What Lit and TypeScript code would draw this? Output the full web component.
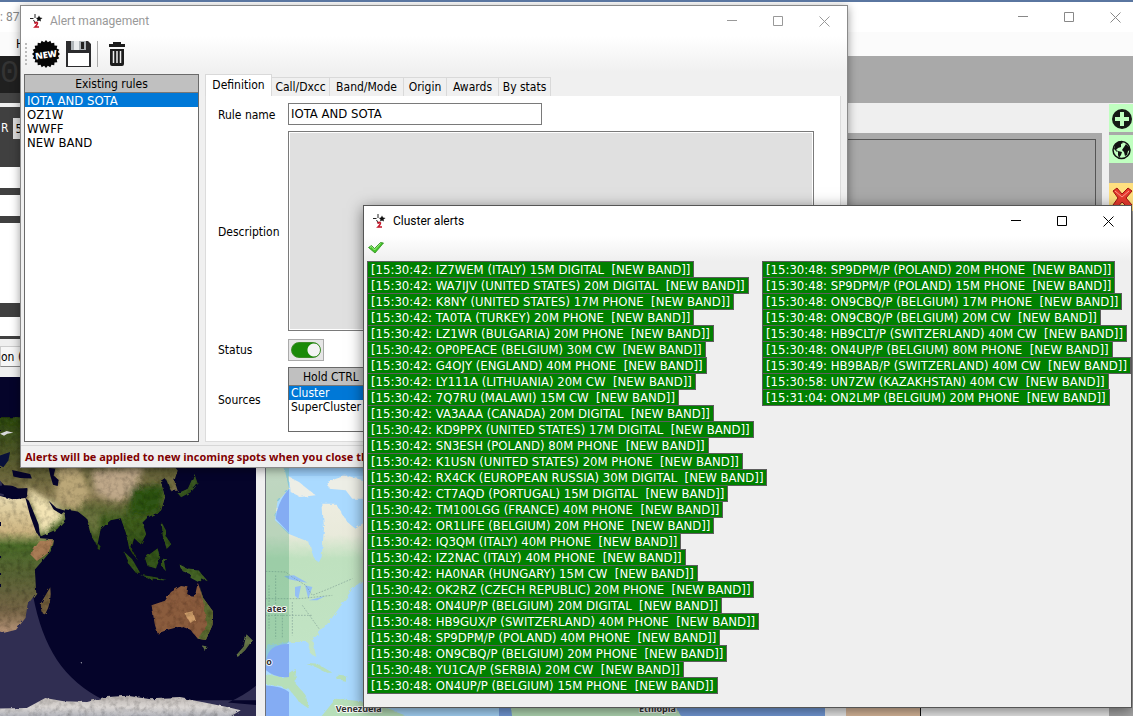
import { LitElement, html, css, svg } from "lit";
import { customElement, property } from "lit/decorators.js";

const FIRST: string[] = [
  "[15:30:42: IZ7WEM (ITALY) 15M DIGITAL  [NEW BAND]]",
  "[15:30:42: WA7IJV (UNITED STATES) 20M DIGITAL  [NEW BAND]]",
  "[15:30:42: K8NY (UNITED STATES) 17M PHONE  [NEW BAND]]",
  "[15:30:42: TA0TA (TURKEY) 20M PHONE  [NEW BAND]]",
  "[15:30:42: LZ1WR (BULGARIA) 20M PHONE  [NEW BAND]]",
  "[15:30:42: OP0PEACE (BELGIUM) 30M CW  [NEW BAND]]",
  "[15:30:42: G4OJY (ENGLAND) 40M PHONE  [NEW BAND]]",
  "[15:30:42: LY111A (LITHUANIA) 20M CW  [NEW BAND]]",
  "[15:30:42: 7Q7RU (MALAWI) 15M CW  [NEW BAND]]",
  "[15:30:42: VA3AAA (CANADA) 20M DIGITAL  [NEW BAND]]",
  "[15:30:42: KD9PPX (UNITED STATES) 17M DIGITAL  [NEW BAND]]",
  "[15:30:42: SN3ESH (POLAND) 80M PHONE  [NEW BAND]]",
  "[15:30:42: K1USN (UNITED STATES) 20M PHONE  [NEW BAND]]",
  "[15:30:42: RX4CK (EUROPEAN RUSSIA) 30M DIGITAL  [NEW BAND]]",
  "[15:30:42: CT7AQD (PORTUGAL) 15M DIGITAL  [NEW BAND]]",
  "[15:30:42: TM100LGG (FRANCE) 40M PHONE  [NEW BAND]]",
  "[15:30:42: OR1LIFE (BELGIUM) 20M PHONE  [NEW BAND]]",
  "[15:30:42: IQ3QM (ITALY) 40M PHONE  [NEW BAND]]",
  "[15:30:42: IZ2NAC (ITALY) 40M PHONE  [NEW BAND]]",
  "[15:30:42: HA0NAR (HUNGARY) 15M CW  [NEW BAND]]",
  "[15:30:42: OK2RZ (CZECH REPUBLIC) 20M PHONE  [NEW BAND]]",
  "[15:30:48: ON4UP/P (BELGIUM) 20M DIGITAL  [NEW BAND]]",
  "[15:30:48: HB9GUX/P (SWITZERLAND) 40M PHONE  [NEW BAND]]",
  "[15:30:48: SP9DPM/P (POLAND) 40M PHONE  [NEW BAND]]",
  "[15:30:48: ON9CBQ/P (BELGIUM) 20M PHONE  [NEW BAND]]",
  "[15:30:48: YU1CA/P (SERBIA) 20M CW  [NEW BAND]]",
  "[15:30:48: ON4UP/P (BELGIUM) 15M PHONE  [NEW BAND]]",
];

const SECOND: string[] = [
  "[15:30:48: SP9DPM/P (POLAND) 20M PHONE  [NEW BAND]]",
  "[15:30:48: SP9DPM/P (POLAND) 15M PHONE  [NEW BAND]]",
  "[15:30:48: ON9CBQ/P (BELGIUM) 17M PHONE  [NEW BAND]]",
  "[15:30:48: ON9CBQ/P (BELGIUM) 20M CW  [NEW BAND]]",
  "[15:30:48: HB9CLT/P (SWITZERLAND) 40M CW  [NEW BAND]]",
  "[15:30:48: ON4UP/P (BELGIUM) 80M PHONE  [NEW BAND]]",
  "[15:30:49: HB9BAB/P (SWITZERLAND) 40M CW  [NEW BAND]]",
  "[15:30:58: UN7ZW (KAZAKHSTAN) 40M CW  [NEW BAND]]",
  "[15:31:04: ON2LMP (BELGIUM) 20M PHONE  [NEW BAND]]",
];

const base = css`
  *, *::before, *::after { box-sizing: border-box; }
  button { font: inherit; color: inherit; background: none; border: 0; padding: 0; margin: 0; }
  svg { display: block; }
`;

const logo = svg`
  <path d="M5 0v4M0 4.500h3.500M3.500 6L5.500 9.500" stroke="#222" stroke-width="1" fill="none"/>
  <path d="M9 1.500l1 2 2.500.5-2 1.500.5 2-2-1-2 1 .5-2L6 4l2-.5z" fill="#111"/>
  <path d="M4.500 9.500q1.500-2 3-.5 0 1.500-2.500 4h4" stroke="#c41528" stroke-width="1.600" fill="none"/>`;

/** Minimise, maximise and close buttons. */
@customElement("caption-buttons")
export class CaptionButtons extends LitElement {
  static styles = [base, css`
    :host { display: flex; gap: 1px; }
    button { width: 45px; height: 30px; display: grid; place-items: center; }
    svg { fill: none; stroke: currentColor; stroke-width: 1; }
  `];
  render() {
    return html`
      <button aria-label="Minimize"><svg width="11" height="11"><path d="M0 4.500h10"/></svg></button>
      <button aria-label="Maximize"><svg width="11" height="11"><path d="M.5.5h9v9h-9z"/></svg></button>
      <button aria-label="Close"><svg width="11" height="11"><path d="M.5.5l10 10M10.500.5l-10 10"/></svg></button>`;
  }
}

/** Title bar of a window: logo, caption, buttons. */
@customElement("title-bar")
export class TitleBar extends LitElement {
  @property() caption = "";
  static styles = [base, css`
    :host { display: flex; align-items: center; height: 30px; padding-left: 9px; background: #fff;
      font: 12px/16px Roboto, "Open Sans", sans-serif; }
    .caption { flex: 1; margin-left: 6px; }
  `];
  render() {
    return html`<svg width="14" height="14" aria-hidden="true">${logo}</svg>
      <span class="caption">${this.caption}</span><caption-buttons></caption-buttons>`;
  }
}

@customElement("day-night-map")
export class DayNightMap extends LitElement {
  static styles = [base, css`
    :host { display: block; overflow: hidden; background: #05042a; }
    svg { width: 100%; height: 100%; }
  `];
  render() {
    return html`<svg viewBox="0 -249 768 1017" preserveAspectRatio="xMinYMax slice" role="img" aria-label="Day and night map">
      <defs>
        <linearGradient id="africa" x1="0" y1="0" x2="0" y2="1">
          <stop offset="0" stop-color="#eadcb0"/><stop offset=".26" stop-color="#cdb582"/>
          <stop offset=".36" stop-color="#4b6a2a"/><stop offset=".6" stop-color="#5a6236"/>
          <stop offset=".85" stop-color="#786648"/><stop offset="1" stop-color="#b9967a"/>
        </linearGradient>
        <linearGradient id="asia" x1="0" y1="0" x2="0" y2="1">
          <stop offset="0" stop-color="#2e4a14"/><stop offset=".35" stop-color="#5f5f34"/>
          <stop offset=".55" stop-color="#84774e"/><stop offset=".72" stop-color="#3f5d20"/><stop offset="1" stop-color="#2d4b15"/>
        </linearGradient>
        <linearGradient id="ice" x1="0" y1="0" x2="0" y2="1">
          <stop offset="0" stop-color="#b5aeaa"/><stop offset=".5" stop-color="#dcd8d5"/><stop offset="1" stop-color="#a9abb4"/>
        </linearGradient>
        <filter id="rough" x="-5%" y="-5%" width="110%" height="110%">
          <feTurbulence type="fractalNoise" baseFrequency=".06" numOctaves="4" seed="4" result="n"/>
          <feDisplacementMap in="SourceGraphic" in2="n" scale="10" result="d"/>
          <feColorMatrix in="n" values="0 0 0 0 0  0 0 0 0 0  0 0 0 0 0  .9 0 0 0 -.38" result="shade"/>
          <feComposite in="shade" in2="d" operator="in" result="s"/>
          <feMerge><feMergeNode in="d"/><feMergeNode in="s"/></feMerge>
        </filter>
        <filter id="soft"><feGaussianBlur stdDeviation="10"/></filter>
        <clipPath id="land"><path d="M0-129H63V0H505L530 30 520 60 505 90 495 55 480 65 492 110 480 150 440 170 425 185 436 220 420 250 400 232 392 260 410 300 385 260 375 215 360 172 330 178 300 205 290 255 272 225 258 172 232 152 190 145 195 175 170 205 122 226 98 170 77 112 82 82 40 84 20 82 0 60z"/></clipPath>
      </defs>
      <rect y="-249" width="768" height="1017" fill="#05042a"/>
      <path d="M0 400H98Q120 520 170 595T310 715H768V768H0zM768 668Q730 700 680 722L768 730zM0 40L12 105H0z" fill="#302e52"/>
      <g filter="url(#rough)">
        <path d="M0-129H63V0H505L530 30 520 60 530 90 510 90 495 55 480 65 492 110 480 150 440 170 425 185 436 220 420 250 400 232 392 260 410 300 385 260 375 215 360 172 330 178 300 205 290 255 272 225 258 172 232 152 190 145 195 175 170 205 122 226 98 170 77 112 82 82 40 84 20 82 0 60z" fill="url(#asia)"/>
        <g clip-path="url(#land)"><g filter="url(#soft)">
          <path d="M78 80L150 120 195 165 120 226z" fill="#f3e4b4"/>
          <path d="M170 20L240 20 270 100 225 150 165 130z" fill="#bba778"/>
          <path d="M270 30L430 20 400 90 350 125 285 100z" fill="#c0a98a"/>
          <path d="M390 80L500 70 480 160 380 170z" fill="#2f5218"/>
          <path d="M235 150L300 150 290 240z" fill="#6d7540"/>
        </g></g>
        <path d="M0 106L40 116 76 112 100 180 120 232 158 235 152 270 104 325 108 395 82 430 76 470 48 505 12 514 0 510z" fill="url(#africa)"/>
        <path d="M120 238L157 236 145 275 110 300 90 280z" fill="#a87b54"/>
        <path d="M150 378Q156 420 135 458 120 462 122 425z" fill="#75603e"/>
        <path d="M292 250l8 5-3 12-6-3z" fill="#30501d"/>
        <path d="M366 268L395 295 418 335 405 335 385 310zM415 340L465 348 500 358 455 356zM432 290L470 262 478 290 465 322 440 315zM483 290l18 2-12 8 6 30-12-12zM482 185l14 25-5 10 20 30-14 14-12-40z" fill="#34541e"/>
        <path d="M535 310L560 322 590 325 620 360 600 352 590 362 568 350 570 340 545 330z" fill="#446428"/>
        <path d="M530 98L560 84 580 40 590 70 570 94 540 110z" fill="#385424"/>
        <path d="M452 432L492 418 510 392 540 374 562 378 558 398 580 410 590 365 606 410 635 450 634 490 614 535 590 532 568 505 540 494 500 505 470 516 462 490z" fill="#8a5c3e"/>
        <path d="M594 370L606 410 635 450 634 490 614 535 590 532 618 490 606 420z" fill="#5b6b30"/>
        <path d="M550 455l25-5 8 25-15 10z" fill="#cf9e6a"/>
        <path d="M602 552l14 2-6 14zM735 518l18 18-22 30-22 20-4-6 22-25z" fill="#66764a"/>
        <path d="M0 740L80 738 135 708 190 718 260 720 310 706 380 702 450 712 540 708 610 722 680 736 718 745 680 768H0z" fill="url(#ice)"/>
      </g>
      <path d="M0 75Q35 70 55 84L82 86 80 110 40 108 0 98zM36 28L90 40 95 54 60 52 40 48zM145 22L165 25 160 45 175 58 172 76 158 72 150 45zM76 112L86 120 115 190 119 225 108 215 90 165zM145 120L168 142 195 150 183 160 160 146z" fill="#05042a"/>
      <path d="M0-80l20-8 20 5-18 3-10 6zM240 602l4 0 0 4z" fill="#d8d8dc"/>
      <path d="M0-15L30-25 25 0 10 20 0 15z" fill="#08103a"/>
    </svg>`;
  }
}

@customElement("street-map")
export class StreetMap extends LitElement {
  static styles = [base, css`
    :host { display: block; overflow: hidden; background: #aadaff; border-left: 1px solid #6c7078; }
    svg { width: 100%; height: 100%; }
    text { font: bold 27px "Noto Sans", sans-serif; fill: #333; stroke: #fff; stroke-width: 5px; paint-order: stroke; }
  `];
  render() {
    return html`<svg viewBox="801 -249 1677 1017" preserveAspectRatio="xMinYMax slice" role="img" aria-label="Street map">
      <defs><linearGradient id="na" x1="0" y1="0" x2="0" y2="1">
        <stop offset="0" stop-color="#f3f0e6"/><stop offset=".38" stop-color="#e9eadb"/><stop offset=".5" stop-color="#bfe1bf"/><stop offset="1" stop-color="#c2e4c5"/>
      </linearGradient>
      <filter id="coast"><feTurbulence type="fractalNoise" baseFrequency=".06" numOctaves="3" seed="2" result="n"/>
        <feDisplacementMap in="SourceGraphic" in2="n" scale="14"/></filter></defs>
      <rect x="798" y="-249" width="1680" height="1017" fill="#aadaff"/>
      <path d="M1500 600H2478V768H1500z" fill="#769edd"/>
      <g filter="url(#coast)">
        <path d="M780-10H850L870 80 835 120 828 175 868 215 930 240 945 290 960 300 968 285 975 200 970 125 1010 125 1045 180 1070 200 1110 170V340L1060 380 1030 425 990 480 940 535 952 585 935 575 925 540 870 540 810 550 780 590z" fill="url(#na)"/>
        <path d="M870 45L900 60 950 100 905 105 875 90zM985 60L1040 40 1110 60V110L1060 110 1040 85 990 80z" fill="#edeee6"/>
        <path d="M920 605L960 608 1000 632 985 632 950 615zM1010 640l36 4-8 12-25-4zM790 635L850 645 890 620 890 665 920 700 930 740 900 720 870 680 800 665zM970 760L1010 710 1110 720 1240 768H960zM1530 690H2000L2050 768H1540z" fill="#b7dfb9"/>
      </g>
      <path d="M855 342L885 340 925 362 900 358 870 352zM888 375l18-4-8 40-10-10zM918 370l22 5-12 35zM930 415l50-14-25 14z" fill="#94bff5"/>
      <path d="M800 328L860 330 880 345 920 370 940 400 990 380 1060 350M810 370V500M830 340V530M800 410H900L1000 400M850 440V530M880 420V520M910 430L960 500M798 460H940" fill="none" stroke="#6d8b86" stroke-width="1.500" stroke-dasharray="5 4"/>
      <path d="M801-249H870V80L835 120 828 175 870 212V540L801 600z" fill="#3f9a68" opacity=".28"/>
      <path d="M870 80Q835 120 830 170L870 212zM801 600Q805 545 870 546V645Q830 650 801 625zM798 670Q850 672 870 690V768H798z" fill="#84acf3"/>
      <path d="M870-249H1110V42H870z" fill="#93c6f5" opacity=".6"/>
      <text x="804" y="450">ates</text>
      <text x="802" y="610">o</text>
      <text x="1010" y="751">Venezuela</text>
      <text x="1920" y="751">Ethiopia</text>
    </svg>`;
  }
}

@customElement("alert-window")
export class AlertWindow extends LitElement {
  static styles = [base, css`
    :host { display: flex; flex-direction: column; background: #f0f0f0; border: 1px solid #8a8a8a; color: #000;
      box-shadow: 0 2px 9px rgba(0,0,0,.4); font: 12px/16px var(--ui); }
    title-bar { color: #999; }
    .tools { display: flex; align-items: center; height: 36px; margin-bottom: 2px; padding-left: 4px;
      background: linear-gradient(#fff, #f0f0f0); }
    .grip { width: 2px; height: 22px; border-left: 2px dotted #bbb; }
    .tools button { margin-left: 5px; }
    .rule { width: 1px; height: 26px; margin: 0 5px 0 6px; background: #aaa; }
    .body { flex: 1; display: flex; gap: 6px; padding: 0 6px 3px 3px; min-height: 0; }
    .box { display: flex; flex-direction: column; border: 1px solid #6a6a6a; background: #fff; }
    .head { height: 18px; line-height: 18px; text-align: center; background: #c0c0c0; border-bottom: 1px solid #777; white-space: nowrap; overflow: hidden; }
    .rules { width: 175px; }
    select { flex: 1; width: 100%; border: 0; padding: 0; margin: 0; outline: 0; background: #fff; font: inherit; color: #000; overflow: hidden; border-radius: 0; }
    option { height: 14px; min-height: 14px; padding: 0 2px; font: 12px/14px var(--ui); }
    .rules option { font: 13px/15px var(--ui); }
    option:checked { background: #0078d7 linear-gradient(#0078d7, #0078d7); color: #fff; }
    .pane { flex: 1; display: flex; flex-direction: column; min-width: 0; }
    .tabs { display: flex; align-items: flex-end; height: 22px; }
    .tab { height: 19px; border: 1px solid #d9d9d9; border-left: 0; border-bottom: 0; background: #f0f0f0; text-align: center; white-space: nowrap; }
    .on { height: 22px; border-left: 1px solid #d9d9d9; background: #fff; width: 67px; padding-bottom: 1px; }
    .w58 { width: 58px; } .w74 { width: 74px; } .w43 { width: 43px; } .w52 { width: 52px; }
    .form { flex: 1; display: grid; grid-template-columns: 70px 1fr; grid-template-rows: 22px 201px 23px 65px; row-gap: 6px;
      align-items: center; padding: 7px 26px 0 12px; background: #fff; border: 1px solid #dcdcdc; border-top: 0; }
    label { padding-top: 1px; }
    .box label { padding-top: 0; }
    input[type="text"] { width: 254px; height: 22px; padding: 0 2px 1px; border: 1px solid #7a7a7a; font: 13px/16px var(--ui); color: #000; outline: 0; }
    textarea { display: block; align-self: start; width: 100%; height: 200px; border: 1px solid #7a7a7a; background: #e0e0e0; resize: none; box-shadow: inset 0 0 0 1px #fff; }
    .switch { display: grid; place-items: center; width: 36px; height: 22px; background: #e6e6e6; border: 1px solid #aaa; }
    .switch input { appearance: none; width: 30px; height: 16px; margin: 0; border: 1px solid #3c8c28; border-radius: 8px;
      background: radial-gradient(circle at 22px 7px, #f4f4f4 6px, #1a8a08 7px); }
    .sources { width: 254px; height: 65px; }
    .sources .head { text-align: left; padding-left: 14px; }
    .note { height: 22px; padding: 3px 4px; border-top: 1px solid #d7d7d7; color: #800000; font: bold 11px/16px "Open Sans", "Noto Sans", sans-serif; white-space: nowrap; overflow: hidden; }
  `];
  render() {
    const teeth = Array.from({ length: 20 }, (_, i) => {
      const a = (i * Math.PI) / 10, b = a + Math.PI / 20;
      return `${14 + 14 * Math.cos(a)},${14 + 14 * Math.sin(a)} ${14 + 12 * Math.cos(b)},${14 + 12 * Math.sin(b)}`;
    }).join(" ");
    return html`
      <title-bar caption="Alert management"></title-bar>
      <div class="tools">
        <span class="grip"></span>
        <button aria-label="New rule"><svg width="28" height="28"><polygon points=${teeth} fill="#050505"/>
          <text x="14" y="18" text-anchor="middle" transform="rotate(-8 14 14)" fill="#fff" font-family="Open Sans, sans-serif" font-weight="800" font-size="9">NEW</text></svg></button>
        <button aria-label="Save rule"><svg width="26" height="28"><path d="M1 1h22l3 3v23H1z" fill="#2b2b2d"/><path d="M6 1h15v9H6z" fill="#aeb4b8"/><path d="M9 1h5v9H9z" fill="#e9ecee"/><path d="M16 2h3v7h-3z" fill="#222"/><path d="M3 13h21v13H3z" fill="#fff"/></svg></button>
        <span class="rule"></span>
        <button aria-label="Delete rule"><svg width="18" height="26"><path d="M1 3h16v3H1zM5 3V1h8v2M2 8h14v15q0 2-2 2H4q-2 0-2-2z" fill="#1d1d1d"/><path d="M5.500 10v12M9 10v12M12.500 10v12" stroke="#eee" stroke-width="1.500"/></svg></button>
      </div>
      <div class="body">
        <div class="box rules">
          <label class="head" for="rules">Existing rules</label>
          <select id="rules" size="8">
            <option selected>IOTA AND SOTA</option><option>OZ1W</option><option>WWFF</option><option>NEW BAND</option>
          </select>
        </div>
        <div class="pane">
          <div class="tabs" role="tablist">
            <button class="tab on" role="tab" aria-selected="true">Definition</button>
            <button class="tab w58" role="tab">Call/Dxcc</button>
            <button class="tab w74" role="tab">Band/Mode</button>
            <button class="tab w43" role="tab">Origin</button>
            <button class="tab w52" role="tab">Awards</button>
            <button class="tab w52" role="tab">By stats</button>
          </div>
          <div class="form">
            <label for="name">Rule name</label><input id="name" type="text" .value=${"IOTA AND SOTA"} />
            <label for="desc">Description</label><textarea id="desc"></textarea>
            <label for="status">Status</label><span class="switch"><input id="status" type="checkbox" role="switch" checked /></span>
            <label for="sources">Sources</label>
            <div class="box sources">
              <div class="head">Hold CTRL</div>
              <select id="sources" size="3" multiple><option selected>Cluster</option><option>SuperCluster</option></select>
            </div>
          </div>
        </div>
      </div>
      <div class="note">Alerts will be applied to new incoming spots when you close this</div>`;
  }
}

@customElement("cluster-window")
export class ClusterWindow extends LitElement {
  static styles = [base, css`
    :host { display: flex; flex-direction: column; background: #efefef; border: 1px solid #555; color: #000;
      box-shadow: 0 3px 14px rgba(0,0,0,.5); font: 13px/15px var(--ui); }
    .tools { height: 25px; padding: 5px 4px; background: linear-gradient(#fff, #efefef); }
    .lists { display: grid; grid-template-columns: 389px 1fr; gap: 6px; padding-left: 3px; }
    ul { list-style: none; margin: 0; padding: 0 0 1px; display: flex; flex-direction: column; align-items: flex-start; }
    li { height: 17px; margin-bottom: -1px; padding: 0 3px; border: 1px solid #5d5d5d; background: #008000; color: #fff; white-space: pre; }
  `];
  render() {
    const list = (rows: string[]) => html`<ul>${rows.map((r) => html`<li>${r}</li>`)}</ul>`;
    return html`
      <title-bar caption="Cluster alerts"></title-bar>
      <div class="tools"><button aria-label="Acknowledge alerts"><svg width="16" height="14"><path d="M.5 6.500l3-2 3 3 6-6 3 .5-8.500 10z" fill="#45c52a" stroke="#2c8b1c" stroke-width=".8"/><path d="M2 6.500l1.500-1 3 3.500 6-6.500" fill="none" stroke="#a5ee8b"/></svg></button></div>
      <div class="lists">${list(FIRST)}${list(SECOND)}</div>`;
  }
}

@customElement("app-root")
export class AppRoot extends LitElement {
  static styles = [base, css`
    :host { --ui: "DejaVu Sans Condensed", "DejaVu Sans", sans-serif;
      position: relative; display: flex; flex-direction: column;
      height: 100vh; overflow: hidden; background: #efefef; border-top: 2px solid #5a76a0; font: 12px/16px var(--ui); color: #000; }
    .caption { display: flex; justify-content: space-between; align-items: center; height: 30px; background: #fff; color: #888; white-space: nowrap; }
    .caption span { font: 12px/16px Roboto, "Open Sans", sans-serif; }
    .caption caption-buttons { margin-right: -5px; }
    .menu { height: 24px; padding: 4px 16px; background: #fbfbfb; }
    .band { display: flex; height: 47px; background: #a9a9a9; }
    .lcd { width: 256px; background: #202020; border-bottom: 10px solid #444; overflow: hidden; color: #343434; font: 32px/36px "Liberation Mono", monospace; }
    .content { flex: 1; display: flex; min-height: 0; }
    .left { width: 256px; display: flex; flex-direction: column; }
    .report { display: flex; gap: 4px; height: 60px; margin-top: 4px; padding: 11px 1px; background: #404040; color: #fff; line-height: 20px; }
    .report input { width: 40px; height: 21px; padding: 0 3px; border: 0; background: #ddd; font: inherit; }
    .row { background: #fff; border-bottom: 7px solid #404040; height: 28px; }
    .tall { height: 94px; border-bottom-width: 14px; }
    .thin { height: 22px; border-bottom-width: 3px; }
    .tab { height: 21px; margin: 7px 0 10px; border: 1px solid #ccc; border-bottom-color: #888; background: #f6f6f6; text-align: left; line-height: 18px; }
    day-night-map { flex: 1; min-height: 0; }
    .center { flex: 1; display: flex; flex-direction: column; min-width: 0; }
    .stage { flex: 1; margin: 30px 0 11px 10px; padding: 6px; background: #a9a9a9; }
    .inner { height: 100%; border: 1px solid #555; }
    .lower { display: flex; height: 339px; gap: 10px; padding-left: 9px; }
    street-map { width: 560px; }
    .tan { width: 75px; margin-left: 11px; background: #dfbd9f; border-right: 1px solid #111; }
    .rail { width: 24px; margin: 1px 0 0 7px; background: #a9a9a9; display: flex; flex-direction: column; gap: 3px; }
    .rail button { height: 28px; background: #c0ffc0; overflow: hidden; display: grid; justify-content: start; align-items: center; padding: 2px 0 0 3px; }
    .rail .del { margin-top: 17px; background: #ffe080; }
    alert-window { position: absolute; left: 20px; top: 3px; width: 828px; height: 463px; }
    cluster-window { position: absolute; left: 363px; top: 203px; width: 769px; height: 503px; }
  `];
  render() {
    return html`
      <header class="caption"><span>: 87</span><caption-buttons></caption-buttons></header>
      <div class="menu">H</div>
      <div class="band"><div class="lcd">08</div></div>
      <main class="content">
        <div class="left">
          <div class="report"><label for="rst">R</label><input id="rst" type="text" .value=${"5"} /></div>
          <div class="row"></div><div class="row"></div><div class="row tall"></div><div class="row thin"></div>
          <button class="tab">on (</button>
          <day-night-map></day-night-map>
        </div>
        <div class="center">
          <div class="stage"><div class="inner"></div></div>
          <div class="lower"><street-map></street-map><div class="tan"></div></div>
        </div>
        <div class="rail">
          <button aria-label="Add"><svg width="21" height="22"><circle cx="10" cy="11" r="10" fill="#161a16"/><path d="M10 4v14M3 11h14" stroke="#c0ffc0" stroke-width="4"/></svg></button>
          <button aria-label="World"><svg width="20" height="22"><circle cx="9.500" cy="11" r="8.500" fill="#c0ffc0" stroke="#111" stroke-width="1.500"/><path d="M3 6q2-4 6-4l2 2-2 1 0 3-3 1-2 2 2 1-1 1-3-3zM6 12l4 1-1 3-2 3-1-3zM12 8l2-3 3 3 1 3-2 1-1 4-2 1-1-4-2-2z" fill="#111"/></svg></button>
          <button class="del" aria-label="Delete"><svg width="21" height="22"><path d="M1 4l4-3 5 6 6-6 4 3-6 7 6 7-4 3-6-6-5 6-4-3 5-7z" fill="#e83a2e" stroke="#9a1410"/><path d="M3 4l7 6 7-6" stroke="#ff9a8c" fill="none"/></svg></button>
        </div>
      </main>
      <alert-window></alert-window>
      <cluster-window></cluster-window>`;
  }
}
